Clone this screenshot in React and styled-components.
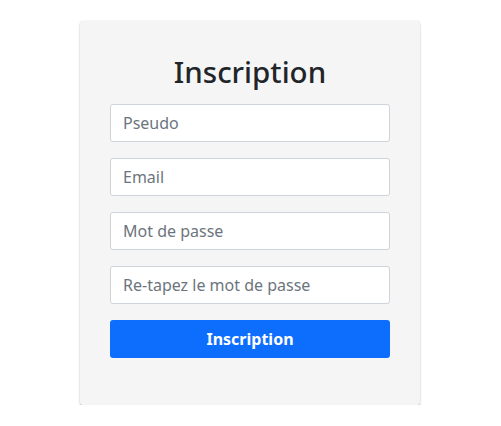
import React from 'react';
import styled, { createGlobalStyle } from 'styled-components';

const GlobalStyle = createGlobalStyle`
	* {
		box-sizing: border-box;
	}

	body {
		margin: 0;
		background: #fff;
		font-family: "Noto Sans", "Open Sans", sans-serif;
		color: #212529;
	}
`;

const Page = styled.div`
	display: flex;
	justify-content: center;
	padding: 21px 1px 0 0;
`;

const Card = styled.form`
	width: 340px;
	background: #f5f5f5;
	border-radius: 3px;
	padding: 33px 30px 47px;
	box-shadow: 0 0 2px rgba(0, 0, 0, 0.12), 0 2px 2px rgba(0, 0, 0, 0.22);
	display: flex;
	flex-direction: column;
	gap: 16px;
`;

const Title = styled.h1`
	margin: 0 0 -1px;
	text-align: center;
	font-size: 29.5px;
	font-weight: 500;
	line-height: 1.2;
	color: #212529;
`;

const Field = styled.input`
	display: block;
	width: 100%;
	height: 38px;
	padding: 6px 12px;
	font-family: inherit;
	font-size: 16px;
	line-height: 1.5;
	color: #212529;
	background: #fff;
	border: 1px solid #ced4da;
	border-radius: 3px;
	outline: none;

	&::placeholder {
		color: #6c757d;
	}
`;

const Submit = styled.button`
	height: 38px;
	border: 0;
	border-radius: 3px;
	background: #0d6efd;
	color: #fff;
	font-family: inherit;
	font-size: 16px;
	font-weight: 700;
	cursor: pointer;
`;

const fields = [
	{ name: 'pseudo', type: 'text', placeholder: 'Pseudo' },
	{ name: 'email', type: 'email', placeholder: 'Email' },
	{ name: 'password', type: 'password', placeholder: 'Mot de passe' },
	{ name: 'confirm', type: 'password', placeholder: 'Re-tapez le mot de passe' },
];

export default function App() {
	return (
		<>
			<GlobalStyle />
			<Page>
				<Card onSubmit={(e) => e.preventDefault()}>
					<Title>Inscription</Title>
					{fields.map((f) => (
						<Field key={f.name} name={f.name} type={f.type} placeholder={f.placeholder} />
					))}
					<Submit type="submit">Inscription</Submit>
				</Card>
			</Page>
		</>
	);
}
